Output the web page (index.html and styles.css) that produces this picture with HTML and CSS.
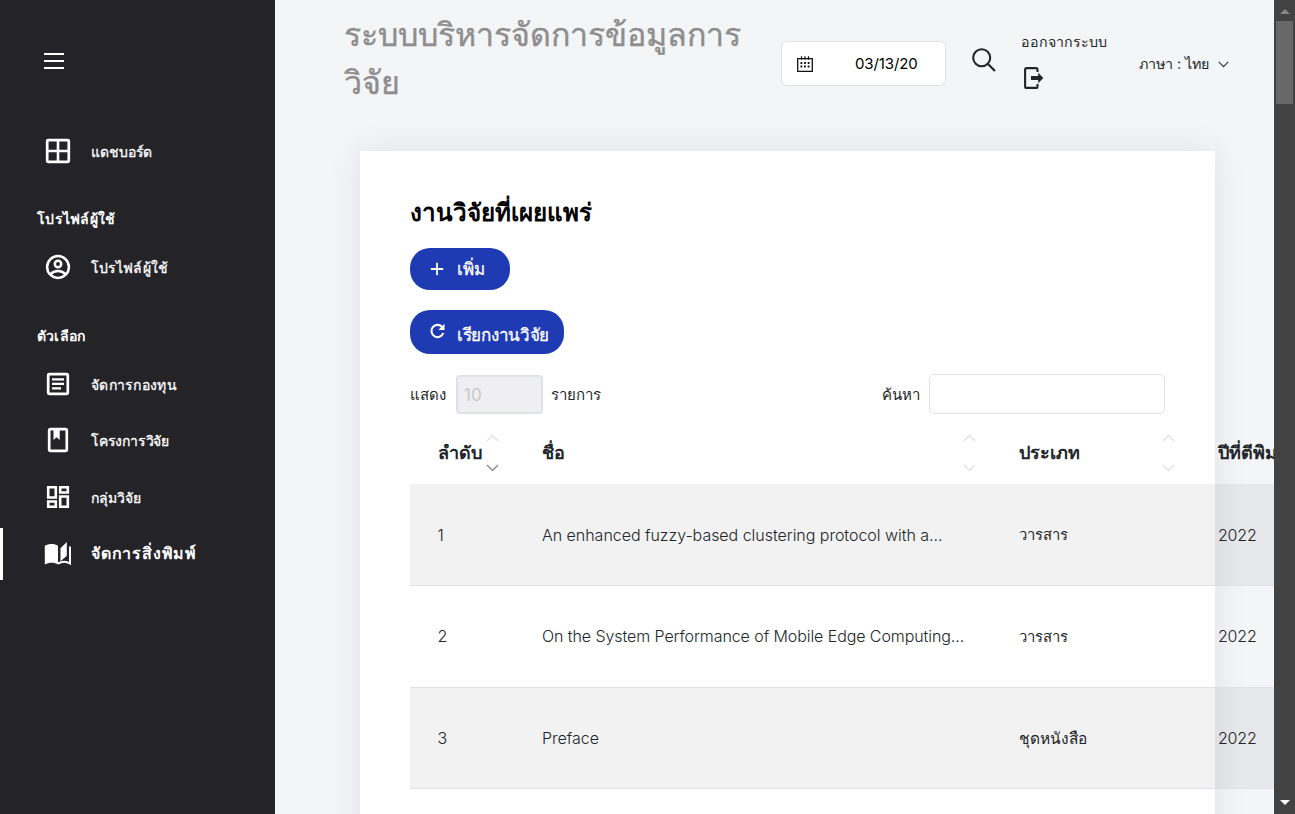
FILE: index.html
```html
<!DOCTYPE html>
<html lang="th">
<head>
<meta charset="utf-8">
<title>งานวิจัยที่เผยแพร่</title>
<link rel="stylesheet" href="styles.css">
</head>
<body>
<div class="app">
  <aside class="sidebar">
    <div class="menu-toggle"><i></i><i></i><i></i></div>
    <nav class="nav">
      <a class="nav-item dash"><svg class="nav-icon" viewBox="0 0 28 28"><rect x="3.200" y="3.200" width="21.600" height="21.600" rx="1" fill="none" stroke="#fff" stroke-width="2.700"/><path d="M14 3v22M3 14h22" stroke="#fff" stroke-width="2.600"/></svg><span>แดชบอร์ด</span></a>
      <div class="nav-title t-profile">โปรไฟล์ผู้ใช้</div>
      <a class="nav-item profile"><svg class="nav-icon" viewBox="0 0 28 28"><g fill="none" stroke="#fff" stroke-width="2.500"><circle cx="14" cy="14" r="10.900"/><circle cx="14" cy="11" r="3.200"/><path d="M6.800 21c1.800-2.300 4.500-3.100 7.200-3.100s5.400.8 7.200 3.100"/></g></svg><span>โปรไฟล์ผู้ใช้</span></a>
      <div class="nav-title t-option">ตัวเลือก</div>
      <a class="nav-item fund"><svg class="nav-icon" viewBox="0 0 28 28"><rect x="4.200" y="4.200" width="19.600" height="19.600" rx="1" fill="none" stroke="#fff" stroke-width="2.700"/><path d="M8 9.300h12M8 13.800h12M8 18.300h9" stroke="#fff" stroke-width="2.300"/></svg><span>จัดการกองทุน</span></a>
      <a class="nav-item project"><svg class="nav-icon" viewBox="0 0 28 28"><rect x="5.200" y="3.200" width="17.600" height="21.600" rx="1.300" fill="none" stroke="#fff" stroke-width="2.700"/><path d="M9.500 3h6.200v11l-3.100-2.700-3.100 2.700z" fill="#fff"/></svg><span>โครงการวิจัย</span></a>
      <a class="nav-item group"><svg class="nav-icon" viewBox="0 0 28 28"><g fill="none" stroke="#fff" stroke-width="2.600"><path d="M4.200 4.200h7.600v10.300H4.200zM16.200 4.200h7.600v5.300h-7.600zM4.200 18.500h7.600v5.300H4.200zM16.200 13.500h7.600v10.300h-7.600z"/></g></svg><span>กลุ่มวิจัย</span></a>
      <a class="nav-item active"><svg class="nav-icon" viewBox="0 0 28 28"><path d="M.8 5.800C5 3.500 10.500 3.500 14 5.800v18.600c-3.500-2.200-9-2.200-13.200 0z" fill="#fff"/><path d="M16.500 8.200 22.800 2v13.800l-6.300 5.500z" fill="#fff"/><path d="M14 23.500c4-2.200 8.500-2.200 12 0V6.500" fill="none" stroke="#fff" stroke-width="2"/></svg><span>จัดการสิ่งพิมพ์</span></a>
    </nav>
  </aside>
  <main class="main">
    <header class="topbar">
      <h1 class="brand">ระบบบริหารจัดการข้อมูลการ<br>วิจัย</h1>
      <div class="date">
        <svg width="16" height="16" viewBox="0 0 16 16"><path d="M.7 2.600h14.600v12.700H.7z" fill="none" stroke="#111" stroke-width="1.300"/><path d="M4.500.3v3.500M8 .3v3.500M11.500.3v3.500" stroke="#111" stroke-width="1.200"/><path d="M3.500 7h9M3.500 10.500h9" stroke="#111" stroke-width="1.800" stroke-dasharray="1.800 1.800"/></svg>
        <span>03/13/20</span>
      </div>
      <svg class="search-icon" viewBox="0 0 24 24"><circle cx="9.700" cy="9.700" r="8.500" fill="none" stroke="#212529" stroke-width="2.100"/><path d="m16 16 7 7" stroke="#212529" stroke-width="2.200"/></svg>
      <a class="logout"><span>ออกจากระบบ</span>
        <svg width="20" height="22" viewBox="0 0 20 22"><path d="M13.500 5V2.600a1.500 1.500 0 0 0-1.500-1.500H2.600a1.500 1.500 0 0 0-1.500 1.500v16.800a1.500 1.500 0 0 0 1.500 1.500H12a1.500 1.500 0 0 0 1.500-1.500V17" fill="none" stroke="#212529" stroke-width="2.100"/><path d="M7 9h7.200V5.700L19.300 11l-5.100 5.300V13H7z" fill="#212529"/></svg>
      </a>
      <div class="lang"><span>ภาษา : ไทย</span><svg width="11" height="7" viewBox="0 0 11 7"><path d="m.7.8 4.800 4.800L10.300.8" fill="none" stroke="#333" stroke-width="1.100"/></svg></div>
    </header>
    <section class="card">
      <h2>งานวิจัยที่เผยแพร่</h2>
      <button class="btn add"><svg width="14" height="14" viewBox="0 0 14 14"><path d="M7 .8v12.400M.8 7h12.400" stroke="#fff" stroke-width="1.800"/></svg><span>เพิ่ม</span></button>
      <button class="btn fetch"><svg width="16" height="16" viewBox="0 0 16 16"><path d="M12.600 3.900A6.100 6.100 0 1 0 13.800 10" fill="none" stroke="#fff" stroke-width="2.100"/><path d="M15 .8v6.200H8.800z" fill="#fff"/></svg><span>เรียกงานวิจัย</span></button>
      <div class="controls">
        <label>แสดง</label><div class="length">10</div><label>รายการ</label>
        <label class="find">ค้นหา</label><input class="query" type="text">
      </div>
      <div class="table">
        <div class="tr head">
          <div class="th">ลำดับ<svg class="sort" viewBox="0 0 13 38"><path d="M1 7l5.500-5.500L12 7" stroke="#e0e0e0" stroke-width="1.300"/><path d="M1 31l5.500 5.500L12 31" stroke="#8f8f8f" stroke-width="1.500"/></svg></div>
          <div class="th">ชื่อ<svg class="sort" viewBox="0 0 13 38"><path d="M1 7l5.500-5.500L12 7M1 31l5.500 5.500L12 31" stroke="#e0e0e0" stroke-width="1.300"/></svg></div>
          <div class="th">ประเภท<svg class="sort" viewBox="0 0 13 38"><path d="M1 7l5.500-5.500L12 7M1 31l5.500 5.500L12 31" stroke="#e0e0e0" stroke-width="1.300"/></svg></div>
          <div class="th">ปีที่ตีพิมพ์</div>
        </div>
        <div class="tr odd"><div>1</div><div class="t1">An enhanced fuzzy-based clustering protocol with a...</div><div class="type">วารสาร</div><div class="year">2022</div></div>
        <div class="tr second"><div>2</div><div class="t2">On the System Performance of Mobile Edge Computing...</div><div class="type">วารสาร</div><div class="year">2022</div></div>
        <div class="tr odd third"><div>3</div><div>Preface</div><div class="type wide">ชุดหนังสือ</div><div class="year">2022</div></div>
      </div>
    </section>
  </main>
  <div class="scrollbar"><i class="up"></i><div class="thumb"></div><i class="down"></i></div>
</div>
</body>
</html>
```
FILE: styles.css
```css
* { box-sizing: border-box; }
body { margin: 0; overflow: hidden; font-family: Inter, "Noto Sans", sans-serif; color: #212529; }
svg { display: block; flex: none; }
.app { display: flex; width: 1295px; height: 814px; overflow: hidden; background: #f4f5f7; }

.sidebar { flex: none; width: 275px; background: #242328; color: #fff; }
.menu-toggle { display: flex; flex-direction: column; gap: 5px; margin: 53px 0 0 44px; width: 20px; }
.menu-toggle i { height: 2px; background: #fff; }
.nav { padding-top: 54px; display: flex; flex-direction: column; font-size: 14px; white-space: nowrap; }
.nav-item { display: flex; align-items: center; height: 56.400px; padding-left: 41px; border-left: 3px solid transparent; -webkit-text-stroke: .3px #fff; }
.nav-item span { padding-top: 2px; }
.dash span { padding-top: 1px; letter-spacing: -.1px; }
.profile span { letter-spacing: .1px; }
.profile { margin-top: -1px; margin-bottom: 1px; }
.fund span { letter-spacing: .3px; }
.project span { letter-spacing: -.2px; }
.group span { letter-spacing: .1px; }
.nav-icon { width: 28px; height: 28px; margin-right: 19px; }
.nav-title { height: 60px; padding: 30px 0 0 37px; font-weight: 700; line-height: 20px; }
.t-profile { letter-spacing: .3px; }
.t-option { letter-spacing: .2px; }
.nav-item.active { height: 52px; margin-top: 3px; border-left-color: #fff; font-size: 16px; font-weight: 600; letter-spacing: .8px; -webkit-text-stroke: 0; }
.nav-item.active span { padding-top: 0; }

.main { flex: none; width: 999px; overflow: hidden; }
.topbar { display: flex; align-items: flex-start; height: 151px; padding-left: 69px; white-space: nowrap; }
.brand { margin: 11px 0 0; width: 437px; font-size: 32.200px; line-height: 48px; font-weight: 400; color: #8e8e8e; -webkit-text-stroke: .4px #8e8e8e; }
.date { display: flex; align-items: center; gap: 42px; width: 165px; height: 45px; margin-top: 41px; padding-left: 15px; background: #fff; border: 1px solid #dee2e6; border-radius: 6px; color: #000; font-size: 15px; letter-spacing: -.1px; }
.search-icon { width: 24px; height: 24px; margin: 48px 25px 0 26px; }
.logout { width: 118px; font-size: 14.200px; line-height: 20px; padding-top: 32px; }
.logout svg { margin: 15px 0 0 3px; }
.lang { display: flex; align-items: center; gap: 9px; font-size: 14.300px; line-height: 20px; padding-top: 54px; }

.card { width: 855px; height: 720px; margin-left: 85px; padding: 36px 50px 0; background: #fff; box-shadow: 0 0 30px rgba(40,50,75,.1); white-space: nowrap; }
h2 { margin: 0; height: 61px; line-height: 51px; font-size: 24.200px; font-weight: 600; color: #000; }
.btn { display: flex; align-items: center; gap: 13px; border: 0; border-radius: 20px; background: #1f3bb3; color: #fff; font: 500 17px Inter, "Noto Sans", sans-serif; padding: 0 0 0 20px; }
.btn span { -webkit-text-stroke: .3px #fff; }
.add { width: 100px; height: 42px; margin-bottom: 20px; }
.add span { margin-top: -1px; }
.fetch { width: 154px; height: 44px; margin-bottom: 20px; gap: 12px; }
.fetch span { padding-top: 4px; margin-left: -1px; letter-spacing: -.3px; }
.fetch svg { margin: -2px 0 0 -1px; width: 17px; }
.controls { display: flex; align-items: center; height: 40px; font-size: 15px; }
.controls label { padding-top: 1px; }
.length { width: 87px; height: 39px; margin: 0 9px 0 10px; padding-left: 6px; border: 2px solid #dee2e6; border-radius: 4px; background: #efeff1; color: #c9c8c8; font-size: 17px; line-height: 36px; }
.length + label { letter-spacing: -.1px; margin-left: -1px; }
.find { margin-left: auto; margin-right: 9px; }
.query { width: 236px; height: 40px; border: 1px solid #dee2e6; border-radius: 5px; background: #fff; padding: 0 8px; outline: 0; }

.table { width: 982px; }
.tr { display: grid; grid-template-columns: 104.500px 477px 199px 173px; align-items: center; height: 102px; padding-left: 27.500px; border-bottom: 1px solid #dee2e6; font-size: 16px; font-weight: 300; }
.odd { background: rgba(0,0,0,.05); }
.second { padding-bottom: 1px; }
.third { height: 101px; }
.t1 { letter-spacing: -.03px; }
.t2 { letter-spacing: -.08px; }
.year { letter-spacing: -.2px; }
.head { height: 70px; border: 0; font-size: 18px; font-weight: 600; }
.th { display: flex; align-items: center; justify-content: space-between; padding-right: 43px; height: 70px; padding-top: 6px; }
.sort { width: 13px; height: 38px; margin-top: 1px; fill: none; }
.type { font-weight: 400; font-size: 14.800px; padding-top: 1px; }
.wide { font-size: 15.500px; }

.scrollbar { flex: none; width: 21px; display: flex; flex-direction: column; align-items: center; background: #424242; }
.up { margin-top: 9px; border: 5px solid transparent; border-top: 0; border-bottom-color: #868686; }
.thumb { width: 17px; height: 83px; margin: 7px 0 auto; background: #686868; }
.down { margin-bottom: 9px; border: 5px solid transparent; border-bottom: 0; border-top-color: #fff; }
```
